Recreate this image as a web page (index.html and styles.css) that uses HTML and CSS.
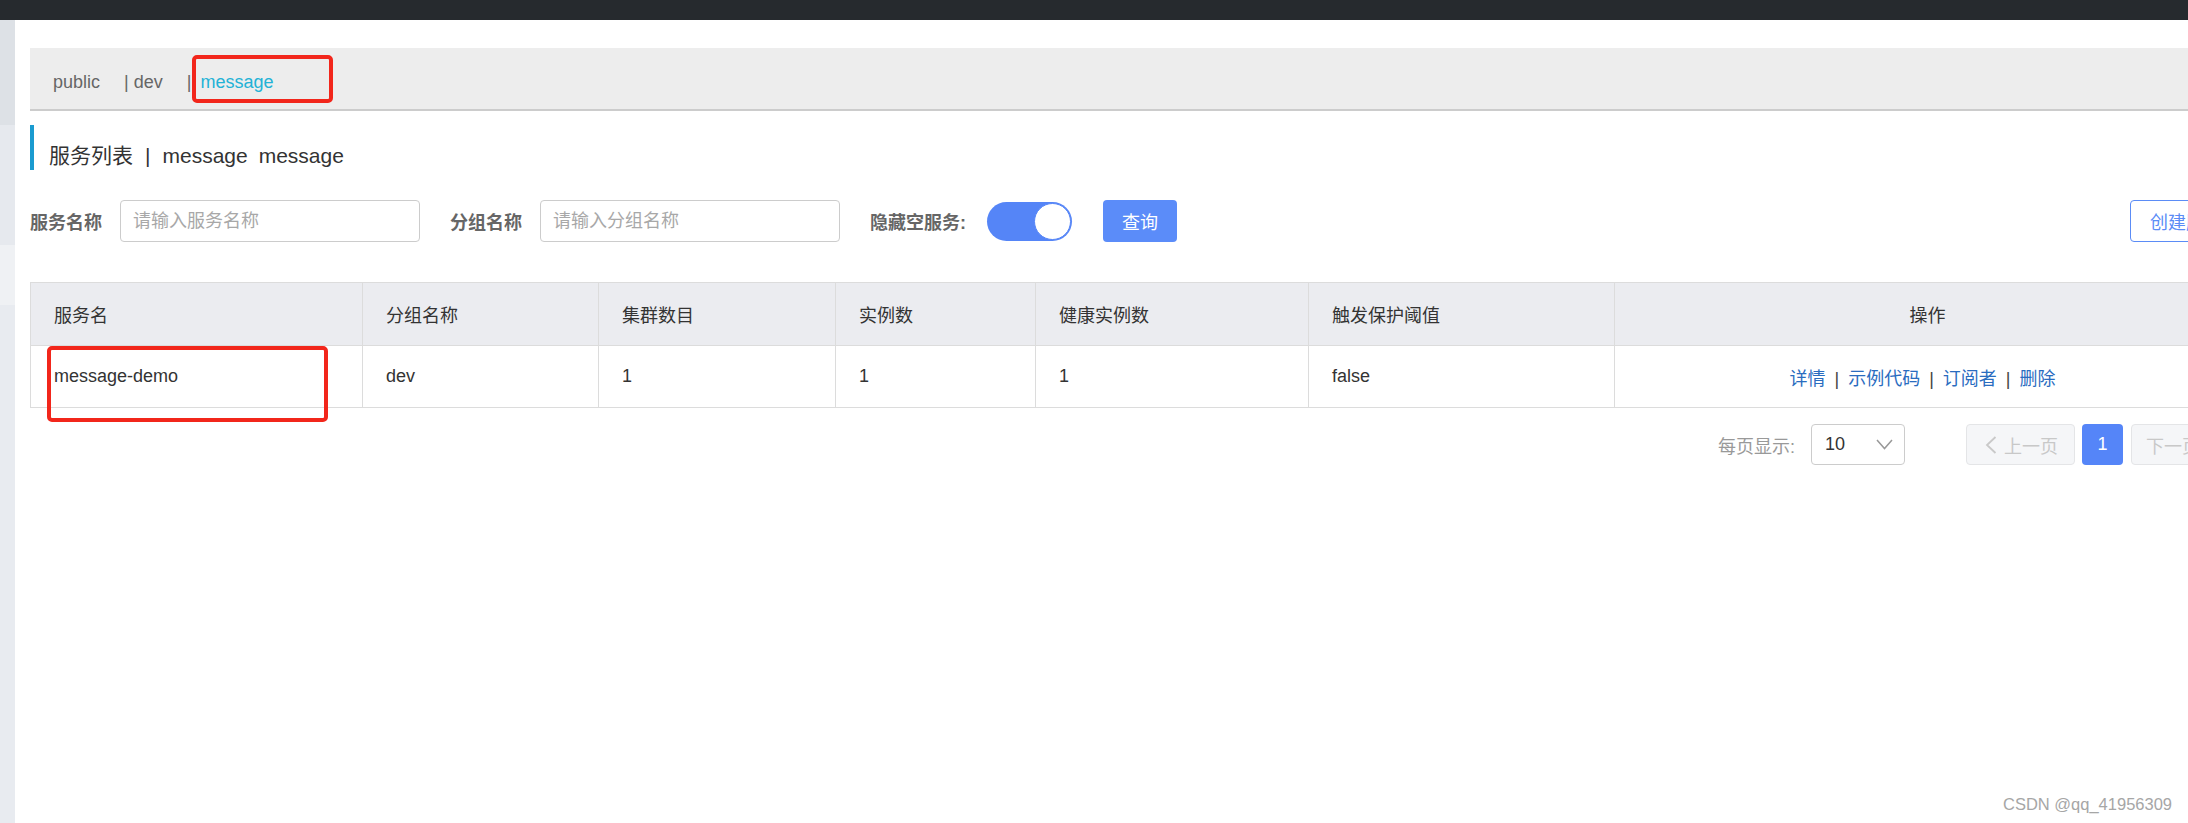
FILE: index.html
```html
<!DOCTYPE html>
<html lang="zh-CN">
<head>
<meta charset="utf-8">
<title>服务列表</title>
<link rel="stylesheet" href="styles.css">
</head>
<body>
<div class="topbar"></div>
<div class="main">
  <aside class="sidebar">
    <div class="sb sb1"></div>
    <div class="sb sb2"></div>
    <div class="sb sb3"></div>
    <div class="sb sb4"></div>
  </aside>
  <section class="content">
    <nav class="crumbs">
      <span class="crumb">public</span>
      <span class="crumb sep-item"><span class="bar">|</span> dev</span>
      <span class="crumb sep-item"><span class="bar">|</span><span class="active">message</span></span>
    </nav>

    <h1 class="title">服务列表<span class="title-sep">|</span><span class="ns">message</span><span class="ns ns2">message</span></h1>

    <div class="filters">
      <label class="flabel">服务名称</label>
      <input class="finput" type="text" placeholder="请输入服务名称">
      <label class="flabel gap">分组名称</label>
      <input class="finput" type="text" placeholder="请输入分组名称">
      <label class="flabel gap">隐藏空服务:</label>
      <div class="toggle"><div class="knob"></div></div>
      <button class="btn-primary">查询</button>
      <button class="btn-outline">创建服务</button>
    </div>

    <table class="grid">
      <colgroup>
        <col class="c1"><col class="c2"><col class="c3"><col class="c4"><col class="c5"><col class="c6"><col class="c7">
      </colgroup>
      <thead>
        <tr>
          <th>服务名</th>
          <th>分组名称</th>
          <th>集群数目</th>
          <th>实例数</th>
          <th>健康实例数</th>
          <th>触发保护阈值</th>
          <th class="center">操作</th>
        </tr>
      </thead>
      <tbody>
        <tr>
          <td>message-demo</td>
          <td>dev</td>
          <td>1</td>
          <td>1</td>
          <td>1</td>
          <td>false</td>
          <td class="center ops"><a class="lnk">详情</a><span class="lsep">|</span><a class="lnk">示例代码</a><span class="lsep">|</span><a class="lnk">订阅者</a><span class="lsep">|</span><a class="lnk">删除</a></td>
        </tr>
      </tbody>
    </table>

    <div class="pager">
      <span class="plabel">每页显示:</span>
      <div class="select"><span>10</span>
        <svg class="chev" width="17" height="11" viewBox="0 0 17 11"><polyline points="1,1 8.5,9.5 16,1" fill="none" stroke="#999" stroke-width="1.5"/></svg>
      </div>
      <button class="pbtn prev"><svg width="12" height="18" viewBox="0 0 12 18"><polyline points="10.5,1 2,9 10.5,17" fill="none" stroke="#c9c9c9" stroke-width="1.8"/></svg><span>上一页</span></button>
      <button class="pnum">1</button>
      <button class="pbtn next"><span>下一页</span><svg width="12" height="18" viewBox="0 0 12 18"><polyline points="1.5,1 10,9 1.5,17" fill="none" stroke="#c9c9c9" stroke-width="1.8"/></svg></button>
    </div>
  </section>
</div>

<div class="mark mark1"></div>
<div class="mark mark2"></div>
<div class="watermark">CSDN @qq_41956309</div>
</body>
</html>
```
FILE: styles.css
```css
* { box-sizing: border-box; }
html, body {
  margin: 0;
  padding: 0;
}
body {
  width: 2188px;
  height: 823px;
  overflow: hidden;
  position: relative;
  background: #ffffff;
  font-family: "Liberation Sans", "Noto Sans CJK SC", sans-serif;
  color: #333333;
}
.topbar {
  height: 20px;
  background: #262a2e;
}
.main {
  display: flex;
  height: 803px;
}
.sidebar {
  width: 15px;
  flex: none;
  display: flex;
  flex-direction: column;
  background: #e8ebf0;
}
.sb1 { height: 105px; background: #dde1e6; }
.sb2 { height: 120px; background: #e6e9ee; }
.sb3 { height: 60px; background: #eff1f4; }
.sb4 { flex: 1; background: #e8ebf0; }

.content {
  flex: none;
  width: 2225px;
  padding: 28px 0 0 15px;
}

/* breadcrumb */
.crumbs {
  height: 63px;
  background: #ededed;
  border-bottom: 2px solid #cccccc;
  display: flex;
  align-items: center;
  padding: 7px 0 0 23px;
  font-size: 18px;
  color: #666666;
}
.sep-item { margin-left: 24px; }
.bar { color: #666; }
.active { color: #23b2d6; margin-left: 9px; }

/* title */
.title {
  margin: 14px 0 0 0;
  height: 45px;
  border-left: 4px solid #1a9bd0;
  padding: 16px 0 0 15px;
  font-size: 21px;
  line-height: 29px;
  font-weight: normal;
  color: #333333;
}
.title-sep { margin: 0 12px 0 12px; }
.ns2 { margin-left: 11px; }

/* filter row */
.filters {
  margin-top: 30px;
  height: 42px;
  display: flex;
  align-items: center;
}
.flabel {
  font-size: 18px;
  font-weight: bold;
  color: #666666;
  margin-right: 18px;
}
.flabel.gap { margin-left: 30px; }
.finput {
  width: 300px;
  height: 42px;
  border: 1px solid #cccccc;
  border-radius: 4px;
  padding: 0 12px;
  font-size: 18px;
  font-family: "Liberation Sans", "Noto Sans CJK SC", sans-serif;
  color: #333;
  outline: none;
}
.finput::placeholder { color: #a8a8a8; }
.toggle {
  margin-left: 3px;
  width: 85px;
  height: 39px;
  border-radius: 20px;
  background: #5585f7;
  display: flex;
  justify-content: flex-end;
  align-items: center;
  padding: 1px;
}
.knob {
  width: 37px;
  height: 37px;
  border-radius: 50%;
  background: #ffffff;
  border: 1px solid #5585f7;
}
.btn-primary {
  margin-left: 31px;
  width: 74px;
  height: 42px;
  border: none;
  border-radius: 4px;
  background: #5b8cf9;
  color: #ffffff;
  font-size: 18px;
  font-family: "Liberation Sans", "Noto Sans CJK SC", sans-serif;
  padding: 0;
}
.btn-outline {
  margin-left: auto;
  height: 42px;
  border: 1px solid #5b8cf6;
  border-radius: 4px;
  background: #ffffff;
  color: #5b8cf6;
  font-size: 18px;
  font-family: "Liberation Sans", "Noto Sans CJK SC", sans-serif;
  padding: 0 19px;
  width: 110px;
  white-space: nowrap;
  overflow: hidden;
  text-align: left;
}

/* table */
.grid {
  margin-top: 40px;
  width: 2210px;
  table-layout: fixed;
  border-collapse: collapse;
  font-size: 18px;
  color: #333333;
}
.c1 { width: 332px; }
.c2 { width: 236px; }
.c3 { width: 237px; }
.c4 { width: 200px; }
.c5 { width: 273px; }
.c6 { width: 306px; }
.c7 { width: 626px; }
.grid th, .grid td {
  border: 1px solid #dcdcdc;
  padding: 0 0 0 23px;
  text-align: left;
  font-weight: normal;
  white-space: nowrap;
}
.grid th {
  height: 63px;
  background: #ebecf0;
}
.grid td {
  height: 62px;
}
.grid .center { text-align: center; padding: 0; }
.grid .ops { padding-right: 10px; }
.lnk { color: #2a6cbf; }
.lsep { color: #444; margin: 0 9px; }

/* pager */
.pager {
  width: 2210px;
  margin-top: 16px;
  display: flex;
  justify-content: flex-end;
  align-items: center;
  height: 41px;
}
.plabel {
  font-size: 18px;
  color: #999999;
}
.select {
  margin-left: 16px;
  width: 94px;
  height: 41px;
  border: 1px solid #cccccc;
  border-radius: 4px;
  display: flex;
  align-items: center;
  justify-content: space-between;
  padding: 0 11px 0 13px;
  font-size: 18px;
  color: #333;
}
.pbtn {
  height: 41px;
  width: 109px;
  background: #f5f6f8;
  border: 1px solid #e4e5e7;
  border-radius: 4px;
  color: #c8c8c8;
  font-size: 18px;
  font-family: "Liberation Sans", "Noto Sans CJK SC", sans-serif;
  display: flex;
  align-items: center;
  gap: 7px;
}
.prev { margin-left: 61px; padding: 0 0 0 18px; }
.next { margin-left: 8px; padding: 0 0 0 14px; }
.pnum {
  margin-left: 7px;
  width: 41px;
  height: 41px;
  border: none;
  border-radius: 4px;
  background: #5585f8;
  color: #ffffff;
  font-size: 18px;
  font-family: "Liberation Sans", "Noto Sans CJK SC", sans-serif;
  padding: 0;
}

/* annotation boxes drawn over the screenshot */
.mark {
  position: absolute;
  border: 4px solid #f2261b;
  border-radius: 5px;
}
.mark1 { left: 192px; top: 55px; width: 141px; height: 48px; }
.mark2 { left: 47px; top: 346px; width: 281px; height: 76px; }

.watermark {
  position: absolute;
  left: 2003px;
  top: 795px;
  font-size: 16.5px;
  color: #a6a6a6;
  font-family: "Liberation Sans", sans-serif;
  white-space: nowrap;
}
```
